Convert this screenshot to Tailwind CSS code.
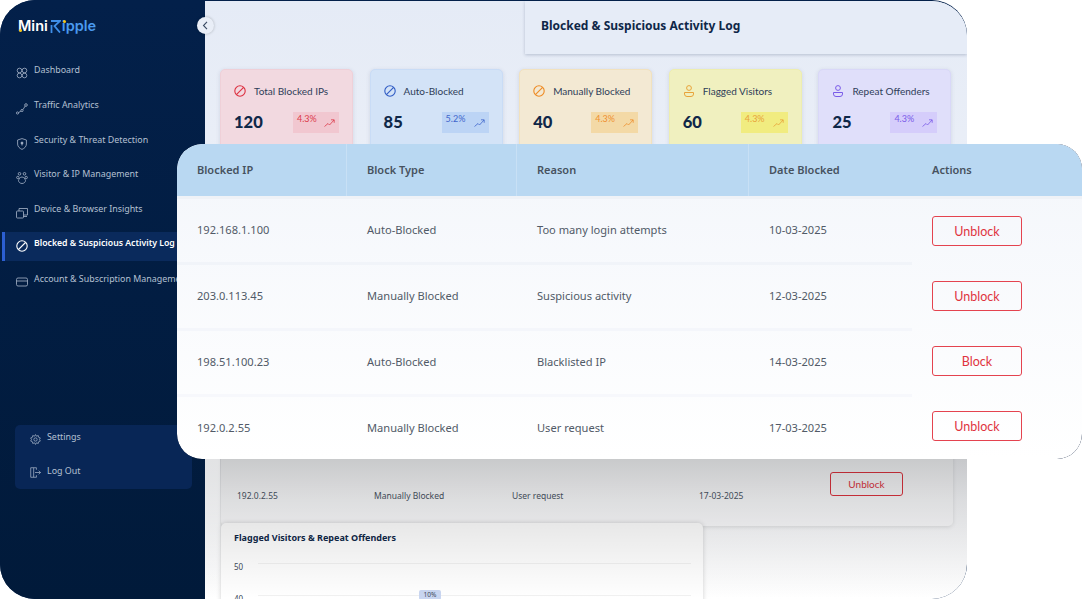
<!DOCTYPE html>
<html lang="en">
<head>
    <meta charset="UTF-8">
    <title>MiniRipple - Blocked & Suspicious Activity Log</title>
    <script src="https://cdn.jsdelivr.net/npm/@tailwindcss/browser@4"></script>
</head>
<body class="bg-white overflow-hidden font-['Noto_Sans',sans-serif]">
<div class="relative w-[1082px] h-[599px] overflow-hidden bg-white">

    <!-- App window -->
    <div class="flex w-[967px] h-[599px] rounded-[35px] overflow-hidden bg-[#03204a]">

        <!-- Sidebar -->
        <aside class="relative w-[205px] shrink-0 h-full flex flex-col bg-linear-to-b from-[#03204a] to-[#011a3a]">
            <div class="flex items-center h-[18px] mt-[17px] ml-[18px] text-[14.5px] leading-none font-semibold font-['Inter',sans-serif]">
                <span class="relative text-white">Mini<span class="absolute left-[1px] bottom-[1px] w-[3px] h-[3px] rounded-full bg-[#f5c518]"></span></span>
                <svg class="w-[11px] h-[13px] ml-[2px]" viewBox="0 0 11 13" fill="none" stroke="#3f8fe8" stroke-width="1.8"><path d="M1 1h9L4.500 6l5.500 6.500M1.500 5v8"/></svg>
                <span class="relative ml-[1px] text-[#4a9af0]">ipple<span class="absolute left-[1px] top-[1px] w-[3px] h-[3px] rounded-full bg-[#f5c518]"></span></span>
            </div>

            <nav class="mt-[28px] flex flex-col text-[8.9px] text-[#b4c0d2]">
                <a class="h-[34.8px] flex items-start pl-[16px] gap-[6px]">
                    <svg class="w-[12px] h-[12px] mt-[4px]" viewBox="0 0 12 12" fill="none" stroke="#a9b6ca" stroke-width=".8"><circle cx="3.5" cy="3.5" r="2.3"/><circle cx="8.5" cy="3.5" r="2.3"/><circle cx="3.5" cy="8.500" r="2.3"/><circle cx="8.5" cy="8.5" r="2.3"/></svg>
                    <span class="leading-[14px]">Dashboard</span>
                </a>
                <a class="h-[34.8px] flex items-start pl-[16px] gap-[6px]">
                    <svg class="w-[12px] h-[12px] mt-[5px]" viewBox="0 0 12 12" fill="none" stroke="#a9b6ca" stroke-width=".8"><circle cx="1.5" cy="10" r="1.1"/><circle cx="6" cy="7.5" r="1.1"/><circle cx="10" cy="2" r="1.3"/><path d="M2.6 9.6 5 8M7 6.6 9.2 3"/></svg>
                    <span class="leading-[14px]">Traffic Analytics</span>
                </a>
                <a class="h-[34.8px] flex items-start pl-[17px] gap-[7px]">
                    <svg class="w-[10px] h-[12px] mt-[5px]" viewBox="0 0 10 12" fill="none" stroke="#a9b6ca" stroke-width=".8"><path d="M5 .6 9.400 2v4c0 2.600-2 4.400-4.400 5.400C2.600 10.400.6 8.600.6 6V2z"/><circle cx="5" cy="5" r="1" fill="#a9b6ca"/><path d="M5 5v2.500"/></svg>
                    <span class="leading-[14px]">Security &amp; Threat Detection</span>
                </a>
                <a class="h-[34.8px] flex items-start pl-[16px] gap-[6px]">
                    <svg class="w-[12px] h-[12px] mt-[5px]" viewBox="0 0 12 12" fill="none" stroke="#a9b6ca" stroke-width=".8"><circle cx="3.5" cy="1.8" r="1.3"/><circle cx="8.5" cy="1.8" r="1.3"/><circle cx="1.8" cy="5.500" r="1.2"/><circle cx="10.2" cy="5.500" r="1.2"/><path d="M6 5c-2 0-3 2-3.500 3.500C2.500 10 4 11.500 6 11.500s3.500-1.500 3.500-3C9 7 8 5 6 5z"/></svg>
                    <span class="leading-[14px]">Visitor &amp; IP Management</span>
                </a>
                <a class="h-[34.8px] flex items-start pl-[16px] gap-[6px]">
                    <svg class="w-[12px] h-[12px] mt-[5px]" viewBox="0 0 12 12" fill="none" stroke="#a9b6ca" stroke-width=".8"><path d="M3 4V1.500h8.500V8H8"/><rect x=".5" y="4" width="7" height="7" rx=".8"/><path d="M7.500 9.500h3.500"/></svg>
                    <span class="leading-[14px]">Device &amp; Browser Insights</span>
                </a>
                <a class="relative h-[29px] -mt-[5px] mb-[10.8px] ml-[2px] pl-[14px] flex items-center gap-[6px] bg-[#0a2a5c] border-l-[3px] border-[#2c5fd2] text-white font-semibold text-[8.7px]">
                    <svg class="w-[12px] h-[12px] -ml-[3px]" viewBox="0 0 12 12" fill="none" stroke="#ffffff" stroke-width="1.1"><circle cx="6" cy="6" r="5.2"/><path d="M2.500 9.500 9.500 2.500"/></svg>
                    <span class="leading-[14px] whitespace-nowrap -mt-[6px]">Blocked &amp; Suspicious Activity Log</span>
                </a>
                <a class="h-[34.8px] flex items-start pl-[16px] gap-[6px] whitespace-nowrap">
                    <svg class="w-[12px] h-[12px] mt-[4px]" viewBox="0 0 12 12" fill="none" stroke="#a9b6ca" stroke-width=".8"><rect x=".5" y="2" width="11" height="8" rx="1.5"/><path d="M.5 5h11"/></svg>
                    <span class="leading-[14px]">Account &amp; Subscription Management</span>
                </a>
            </nav>

            <div class="mt-[118px] mx-[15px] w-[177px] h-[64px] rounded-[5px] bg-[#082656] text-[8.9px] text-[#b4c0d2] pl-[15px] pt-[5px] flex flex-col">
                <a class="h-[34.8px] shrink-0 flex items-start gap-[6px]">
                    <svg class="w-[11px] h-[11px] mt-[4px]" viewBox="0 0 12 12" fill="none" stroke="#a9b6ca" stroke-width=".8"><circle cx="6" cy="6" r="1.8"/><path d="M6 .6 7 2.400 9 1.700 9.400 3.600 11.300 4.300 10.300 6 11.300 7.700 9.400 8.400 9 10.300 7 9.600 6 11.400 5 9.600 3 10.300 2.600 8.400.7 7.700 1.700 6 .7 4.300 2.600 3.600 3 1.700 5 2.400z"/></svg>
                    <span class="leading-[14px]">Settings</span>
                </a>
                <a class="h-[24px] shrink-0 flex items-start gap-[6px]">
                    <svg class="w-[11px] h-[11px] mt-[3px]" viewBox="0 0 12 12" fill="none" stroke="#a9b6ca" stroke-width=".8"><path d="M7 3V.8H.8v10.400H7V9"/><path d="M4 .9v10.200M5.500 6h6M9.500 4l2 2-2 2"/></svg>
                    <span class="leading-[14px]">Log Out</span>
                </a>
            </div>

            <button class="absolute left-[197px] top-[17px] z-10 w-[17px] h-[17px] rounded-full bg-[#e9eef7] shadow-[0_0_3px_rgba(0,0,0,0.25)] flex items-center justify-center">
                <svg class="w-[7px] h-[9px]" viewBox="0 0 7 9" fill="none" stroke="#3a4a63" stroke-width="1.1"><path d="M5 .8 1.500 4.500 5 8.200"/></svg>
            </button>
        </aside>

        <!-- Main -->
        <main class="relative flex-1 h-full mt-px rounded-r-[35px] overflow-hidden flex flex-col bg-linear-to-b from-[#e5ebf6] via-[#f0f3f9] via-60% to-white">
            <div class="ml-[320px] h-[53px] shrink-0 pl-[16px] pb-[3px] flex items-center bg-[#e6ecf7] shadow-[0_1px_3px_rgba(40,60,100,0.25)] text-[12px] font-bold text-[#0f2748]">
                Blocked &amp; Suspicious Activity Log
            </div>

            <!-- Stat cards -->
            <div class="ml-[15px] mt-[15px] flex gap-[16.6px] font-['Lato',sans-serif]">
                <div class="w-[133px] h-[92px] shrink-0 rounded-[5px] bg-[#f2d9e0] border border-[#efd0d8] shadow-[0_1px_4px_rgba(60,70,110,0.15)] pl-[13px] pt-[14px]">
                    <div class="flex items-center gap-[8px] h-[14px] text-[10px] text-[#2e3d58]">
                        <svg class="w-[12px] h-[12px]" viewBox="0 0 12 12" fill="none" stroke="#dc2f3f" stroke-width="1.1"><circle cx="6" cy="6" r="5.2"/><path d="M2.400 9.600 9.600 2.400"/></svg>
                        Total Blocked IPs
                    </div>
                    <div class="flex items-center justify-between mt-[13px] pr-[13px]">
                        <span class="text-[16.5px] leading-[23px] font-black text-[#0f2748]">120</span>
                        <span class="w-[46px] h-[21px] -mt-[1px] bg-[#f1c7d0] flex items-start justify-between px-[4px] text-[9px] leading-[14px] text-[#dc3a4a]">4.3%
                            <svg class="w-[11px] h-[8px] mt-[7px]" viewBox="0 0 11 8" fill="none" stroke="#dc3a4a" stroke-width=".8"><path d="M.5 7.500 4 4.500l1.500 1.500L10 1M7 .8h3.200v3"/></svg>
                        </span>
                    </div>
                </div>
                <div class="w-[133px] h-[92px] shrink-0 rounded-[5px] bg-[#d3e3f7] border border-[#c9dcf6] shadow-[0_1px_4px_rgba(60,70,110,0.15)] pl-[13px] pt-[14px]">
                    <div class="flex items-center gap-[8px] h-[14px] text-[10px] text-[#2e3d58]">
                        <svg class="w-[12px] h-[12px]" viewBox="0 0 12 12" fill="none" stroke="#2f5bc4" stroke-width="1.1"><circle cx="6" cy="6" r="5.2"/><path d="M2.400 9.600 9.600 2.400"/></svg>
                        Auto-Blocked
                    </div>
                    <div class="flex items-center justify-between mt-[13px] pr-[13px]">
                        <span class="text-[16.5px] leading-[23px] font-black text-[#0f2748]">85</span>
                        <span class="w-[47px] h-[21px] -mt-[1px] bg-[#bcd4f5] flex items-start justify-between px-[4px] text-[9px] leading-[14px] text-[#3f66cc]">5.2%
                            <svg class="w-[11px] h-[8px] mt-[7px]" viewBox="0 0 11 8" fill="none" stroke="#3f66cc" stroke-width=".8"><path d="M.5 7.500 4 4.500l1.500 1.500L10 1M7 .8h3.200v3"/></svg>
                        </span>
                    </div>
                </div>
                <div class="w-[133px] h-[92px] shrink-0 rounded-[5px] bg-[#f3e9d3] border border-[#f2e2bf] shadow-[0_1px_4px_rgba(60,70,110,0.15)] pl-[13px] pt-[14px]">
                    <div class="flex items-center gap-[8px] h-[14px] text-[10px] text-[#2e3d58]">
                        <svg class="w-[12px] h-[12px]" viewBox="0 0 12 12" fill="none" stroke="#ee8a22" stroke-width="1.1"><circle cx="6" cy="6" r="5.2"/><path d="M2.400 9.600 9.600 2.400"/></svg>
                        Manually Blocked
                    </div>
                    <div class="flex items-center justify-between mt-[13px] pr-[13px]">
                        <span class="text-[16.5px] leading-[23px] font-black text-[#0f2748]">40</span>
                        <span class="w-[47px] h-[21px] -mt-[1px] bg-[#f3d9a6] flex items-start justify-between px-[4px] text-[9px] leading-[14px] text-[#ef9030]">4.3%
                            <svg class="w-[11px] h-[8px] mt-[7px]" viewBox="0 0 11 8" fill="none" stroke="#ef9030" stroke-width=".8"><path d="M.5 7.500 4 4.500l1.500 1.500L10 1M7 .8h3.200v3"/></svg>
                        </span>
                    </div>
                </div>
                <div class="w-[133px] h-[92px] shrink-0 rounded-[5px] bg-[#f0f0bf] border border-[#eeeeb0] shadow-[0_1px_4px_rgba(60,70,110,0.15)] pl-[13px] pt-[14px]">
                    <div class="flex items-center gap-[8px] h-[14px] text-[10px] text-[#2e3d58]">
                        <svg class="w-[12px] h-[12px]" viewBox="0 0 12 12" fill="none" stroke="#e8a33a" stroke-width="1"><circle cx="6" cy="3" r="2.400"/><path d="M1.500 7.500h9v1.500a2.500 2.500 0 0 1-2.500 2.500H4a2.500 2.500 0 0 1-2.500-2.500z"/></svg>
                        Flagged Visitors
                    </div>
                    <div class="flex items-center justify-between mt-[13px] pr-[13px]">
                        <span class="text-[16.5px] leading-[23px] font-black text-[#0f2748]">60</span>
                        <span class="w-[47px] h-[21px] -mt-[1px] bg-[#f1ec80] flex items-start justify-between px-[4px] text-[9px] leading-[14px] text-[#e8a33a]">4.3%
                            <svg class="w-[11px] h-[8px] mt-[7px]" viewBox="0 0 11 8" fill="none" stroke="#e8a33a" stroke-width=".8"><path d="M.5 7.500 4 4.500l1.500 1.500L10 1M7 .8h3.200v3"/></svg>
                        </span>
                    </div>
                </div>
                <div class="w-[133px] h-[92px] shrink-0 rounded-[5px] bg-[#e0dffa] border border-[#d9d8f8] shadow-[0_1px_4px_rgba(60,70,110,0.15)] pl-[13px] pt-[14px]">
                    <div class="flex items-center gap-[8px] h-[14px] text-[10px] text-[#2e3d58]">
                        <svg class="w-[12px] h-[12px]" viewBox="0 0 12 12" fill="none" stroke="#7a5be8" stroke-width="1"><circle cx="6" cy="3" r="2.400"/><path d="M1.500 7.500h9v1.500a2.500 2.500 0 0 1-2.500 2.500H4a2.500 2.500 0 0 1-2.500-2.500z"/></svg>
                        Repeat Offenders
                    </div>
                    <div class="flex items-center justify-between mt-[13px] pr-[13px]">
                        <span class="text-[16.5px] leading-[23px] font-black text-[#0f2748]">25</span>
                        <span class="w-[47px] h-[21px] -mt-[1px] bg-[#d5cdfb] flex items-start justify-between px-[4px] text-[9px] leading-[14px] text-[#7a5be8]">4.3%
                            <svg class="w-[11px] h-[8px] mt-[7px]" viewBox="0 0 11 8" fill="none" stroke="#7a5be8" stroke-width=".8"><path d="M.5 7.500 4 4.500l1.500 1.500L10 1M7 .8h3.200v3"/></svg>
                        </span>
                    </div>
                </div>
            </div>

            <!-- Table behind the floating one -->
            <div class="ml-[16px] mt-[14px] w-[732px] h-[351px] shrink-0 relative rounded-[5px] bg-white/40 shadow-[0_1px_4px_rgba(0,0,0,0.12)]">
                <div class="absolute left-0 bottom-0 w-[593px] h-[54px] bg-white/15 grid grid-cols-[137px_138px_187px_115px] text-[8.5px] text-[#4a5564] items-center pl-[16px] pb-[6px]">
                    <span>192.0.2.55</span>
                    <span>Manually Blocked</span>
                    <span>User request</span>
                    <span>17-03-2025</span>
                </div>
                <div class="absolute left-[593px] right-0 bottom-0 h-[15px] bg-white/15"></div>
                <button class="absolute left-[609px] bottom-[30px] w-[73px] h-[24px] rounded-[3px] border border-[#e0343f] text-[10px] text-[#e0343f] font-['Lato',sans-serif]">Unblock</button>
            </div>

            <!-- Chart card -->
            <div class="absolute left-[16px] top-[522px] w-[482px] h-[90px] rounded-[5px] bg-white shadow-[0_0_5px_rgba(0,0,0,0.18)] pl-[13px] pr-[12px] pt-[8px]">
                <h3 class="text-[9px] font-bold leading-[14px] text-[#0f2748]">Flagged Visitors &amp; Repeat Offenders</h3>
                <div class="mt-[17px] flex items-start gap-[4px] text-[8px] leading-[10px] text-[#3e4a5c]"><span class="w-[10px]">50</span><span class="flex-1 h-px mt-px ml-[10px] bg-[#f1f1f1]"></span></div>
                <div class="mt-[22px] flex items-start gap-[4px] text-[8px] leading-[10px] text-[#3e4a5c]"><span class="w-[10px]">40</span><span class="flex-1 h-px mt-px ml-[10px] bg-[#f1f1f1]"></span></div>
                <span class="absolute left-[198px] top-[67px] w-[22px] h-[10px] rounded-[2px] bg-[#c9d6f1] text-center text-[6.5px] leading-[10px] text-[#3e4a5c]">10%</span>
            </div>

            <!-- Shadow thrown by the floating table -->
            <div class="absolute left-0 right-0 top-[400px] h-[198px] bg-linear-to-b from-black/30 via-black/12 to-black/0"></div>
            <div class="absolute left-0 top-[400px] w-[15px] h-[198px] bg-linear-to-b from-white/70 to-white/0"></div>
        </main>
    </div>

    <!-- Floating table -->
    <div class="absolute left-[177px] top-[144px] w-[905px] h-[315px] rounded-[25px] overflow-hidden bg-[#33415c]">
        <div class="h-full rounded-[25px] overflow-hidden bg-linear-to-b from-[#f3f6fb] to-white text-[11.1px] text-[#515a67]">
            <div class="grid grid-cols-[170px_170px_232px_163px_1fr] h-[52px] bg-[#b9d8f2] font-semibold text-[11px] text-[#47525f]">
                <div class="pl-[20px] flex items-center border-r border-[#c8e0f5]">Blocked IP</div>
                <div class="pl-[20px] flex items-center border-r border-[#c8e0f5]">Block Type</div>
                <div class="pl-[20px] flex items-center border-r border-[#c8e0f5]">Reason</div>
                <div class="pl-[20px] flex items-center">Date Blocked</div>
                <div class="pl-[20px] flex items-center">Actions</div>
            </div>
            <div class="h-[3px] bg-[#eff2f7]"></div>
            <div class="grid grid-cols-[170px_170px_232px_163px_1fr] h-[66px]">
                <div class="pl-[20px] pt-[23px] border-b-[3px] border-[#f1f4f9]">192.168.1.100</div>
                <div class="pl-[20px] pt-[23px] border-b-[3px] border-[#f1f4f9]">Auto-Blocked</div>
                <div class="pl-[20px] pt-[23px] border-b-[3px] border-[#f1f4f9]">Too many login attempts</div>
                <div class="pl-[20px] pt-[23px] border-b-[3px] border-[#f1f4f9]">10-03-2025</div>
                <div class="pl-[20px] pt-[17px]"><button class="w-[90px] h-[30px] pt-[2px] rounded-[3px] border border-[#e4434f] text-[12.5px] text-[#e0343f] font-['Lato',sans-serif]">Unblock</button></div>
            </div>
            <div class="grid grid-cols-[170px_170px_232px_163px_1fr] h-[66px]">
                <div class="pl-[20px] pt-[23px] border-b-[3px] border-[#f4f6fb]">203.0.113.45</div>
                <div class="pl-[20px] pt-[23px] border-b-[3px] border-[#f4f6fb]">Manually Blocked</div>
                <div class="pl-[20px] pt-[23px] border-b-[3px] border-[#f4f6fb]">Suspicious activity</div>
                <div class="pl-[20px] pt-[23px] border-b-[3px] border-[#f4f6fb]">12-03-2025</div>
                <div class="pl-[20px] pt-[16px]"><button class="w-[90px] h-[30px] pt-[2px] rounded-[3px] border border-[#e4434f] text-[12.5px] text-[#e0343f] font-['Lato',sans-serif]">Unblock</button></div>
            </div>
            <div class="grid grid-cols-[170px_170px_232px_163px_1fr] h-[66px]">
                <div class="pl-[20px] pt-[23px] border-b-[3px] border-[#f7f8fc]">198.51.100.23</div>
                <div class="pl-[20px] pt-[23px] border-b-[3px] border-[#f7f8fc]">Auto-Blocked</div>
                <div class="pl-[20px] pt-[23px] border-b-[3px] border-[#f7f8fc]">Blacklisted IP</div>
                <div class="pl-[20px] pt-[23px] border-b-[3px] border-[#f7f8fc]">14-03-2025</div>
                <div class="pl-[20px] pt-[15px]"><button class="w-[90px] h-[30px] pt-[2px] rounded-[3px] border border-[#e4434f] text-[12.5px] text-[#e0343f] font-['Lato',sans-serif]">Block</button></div>
            </div>
            <div class="grid grid-cols-[170px_170px_232px_163px_1fr] h-[62px]">
                <div class="pl-[20px] pt-[23px]">192.0.2.55</div>
                <div class="pl-[20px] pt-[23px]">Manually Blocked</div>
                <div class="pl-[20px] pt-[23px]">User request</div>
                <div class="pl-[20px] pt-[23px]">17-03-2025</div>
                <div class="pl-[20px] pt-[14px]"><button class="w-[90px] h-[30px] pt-[2px] rounded-[3px] border border-[#e4434f] text-[12.5px] text-[#e0343f] font-['Lato',sans-serif]">Unblock</button></div>
            </div>
        </div>
    </div>
</div>
</body>
</html>
